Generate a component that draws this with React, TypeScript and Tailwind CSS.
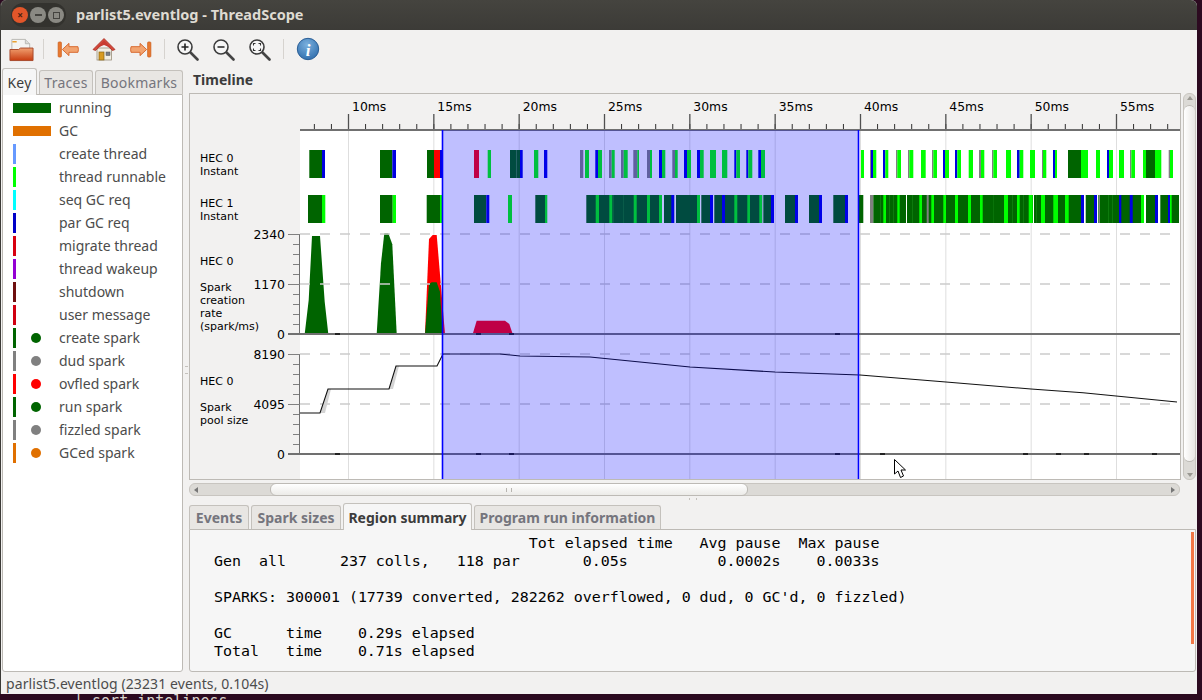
const UI = { fontFamily: '"Noto Sans", "Open Sans", sans-serif' };

// ── Key ───────────────────────────────────────────────────────────────────────

type KeyItem = { label: string; color: string; kind: 'box' | 'tick' | 'dot' };

const KEY_ITEMS: KeyItem[] = [
  { label: 'running', color: '#006400', kind: 'box' },
  { label: 'GC', color: '#e07000', kind: 'box' },
  { label: 'create thread', color: '#6699ff', kind: 'tick' },
  { label: 'thread runnable', color: '#00ff00', kind: 'tick' },
  { label: 'seq GC req', color: '#00ffff', kind: 'tick' },
  { label: 'par GC req', color: '#0000c8', kind: 'tick' },
  { label: 'migrate thread', color: '#d8000f', kind: 'tick' },
  { label: 'thread wakeup', color: '#9400d3', kind: 'tick' },
  { label: 'shutdown', color: '#6e0f0f', kind: 'tick' },
  { label: 'user message', color: '#d00010', kind: 'tick' },
  { label: 'create spark', color: '#006400', kind: 'dot' },
  { label: 'dud spark', color: '#808080', kind: 'dot' },
  { label: 'ovfled spark', color: '#ff0000', kind: 'dot' },
  { label: 'run spark', color: '#006400', kind: 'dot' },
  { label: 'fizzled spark', color: '#808080', kind: 'dot' },
  { label: 'GCed spark', color: '#e07000', kind: 'dot' },
];

function KeyRow({ item }: { item: KeyItem }) {
  return (
    <div className="flex h-[23px] items-center">
      {item.kind === 'box' ? (
        <div className="ml-[10px] h-[10px] w-[38px]" style={{ background: item.color }} />
      ) : (
        <div className="flex w-[48px] items-center">
          <div className="ml-[10px] h-[20px] w-[3px]" style={{ background: item.color }} />
          {item.kind === 'dot' && <div className="ml-[15px] h-[10px] w-[10px] rounded-full" style={{ background: item.color }} />}
        </div>
      )}
      <span className="ml-[8px] text-[14px] text-[#4c4c4c]">{item.label}</span>
    </div>
  );
}

// ── Datos del timeline ────────────────────────────────────────────────────────

const C: Record<string, string> = { g: '#006400', l: '#00ff00', b: '#0000e0', r: '#ff0000', c: '#ff0008', s: '#808080', w: '#ffffff', d: '#0d7a0d' };

type Bar = [number, number, string];

const HEC0: Bar[] = [
  [309.3, 322, 'g'], [322, 325, 'b'], [380, 392.3, 'g'], [392.3, 396, 'b'], [427, 434, 'g'], [434, 440, 'r'], [440, 442.5, 'b'],
  [474, 479, 'c'], [487.7, 491, 'l'], [510, 516.7, 'g'], [516.7, 520, 'g'], [520, 522.7, 'b'],
  [534, 538.3, 'l'], [544, 547.3, 'b'], [580, 583.3, 's'], [585, 589, 'l'], [595.3, 598, 'b'], [598, 602, 'l'],
  [609, 611.7, 's'], [611.7, 614.7, 'l'], [621, 623.7, 's'], [623.7, 627.7, 'l'], [633.3, 637.3, 's'], [637.3, 639, 'l'],
  [647, 650, 's'], [650, 652, 'l'], [659, 662, 'b'], [662, 665.3, 'l'], [672.3, 675, 's'], [675, 677.7, 'l'],
  [684, 687, 'b'], [687, 691, 'l'], [697, 700, 'b'], [700, 703.7, 'l'], [710, 716, 'l'], [722, 727.3, 'l'],
  [734.3, 736.3, 'b'], [736.3, 740, 'l'], [746.3, 748.3, 'b'], [748.3, 752.3, 'l'], [758.3, 761, 'b'], [761, 765, 'l'],
  [861, 864, 'l'], [870, 871, 's'], [871, 873, 'b'], [873, 876.3, 'l'], [883, 885.3, 'b'], [885.3, 888.3, 'l'],
  [896, 897.3, 's'], [897.3, 901, 'l'], [908, 909.3, 's'], [909.3, 913.3, 'l'], [921, 925.7, 'l'], [932, 933.3, 's'], [933.3, 937, 'l'],
  [943, 945, 'b'], [945, 949, 'l'], [955, 957.3, 'b'], [957.3, 961, 'l'], [968.7, 973, 'l'], [979, 981, 's'], [981, 984.3, 'l'],
  [992, 993.3, 's'], [993.3, 997, 'l'], [1006, 1011, 'l'], [1017, 1019.7, 'b'], [1019.7, 1023.3, 'l'], [1030, 1035, 'l'],
  [1042, 1043, 's'], [1043, 1046.3, 'l'], [1053, 1055, 'b'], [1055, 1057, 'l'], [1068, 1081, 'g'], [1081, 1085, 'l'], [1085, 1088, 'l'],
  [1096, 1100, 'l'], [1107, 1109, 'b'], [1109, 1113, 'l'], [1119, 1124, 'l'], [1130, 1131.3, 's'], [1131.3, 1135, 'l'],
  [1143, 1146, 'l'], [1146, 1155, 'g'], [1155, 1161.3, 'l'], [1168.7, 1170, 's'], [1170, 1173, 'l'],
];

const HEC1: Bar[] = [
  [308, 322, 'g'], [322, 325.3, 'l'], [380, 392.7, 'g'], [392.7, 396, 'l'], [426.7, 440, 'g'], [440, 442.5, 'l'],
  [474, 486.3, 'g'], [486.3, 489.3, 'b'], [508, 512, 'l'], [535.3, 545, 'g'], [545, 547.3, 'l'],
  [586.3, 771, 'g'], [595.7, 599, 'l'], [609.3, 612.3, 'l'], [613, 614, 'd'], [623, 624, 'd'], [633.7, 636.7, 'l'], [647, 650, 'l'],
  [659, 662, 'l'], [662, 664, 'w'], [671.3, 674.3, 'b'], [674.3, 676, 'w'], [697, 700, 'l'], [700, 701.3, 'w'], [710, 713, 'b'], [713, 714.3, 'w'],
  [722, 725, 'b'], [734.3, 737.3, 'l'], [747.3, 750, 'l'], [759.3, 762.3, 'l'], [762.3, 763.3, 'w'], [771, 774, 'b'],
  [785, 795, 'g'], [795, 798, 'b'], [809, 819, 'g'], [819, 822, 'b'], [833.3, 845, 'g'], [845, 848, 'b'],
  [859, 863.3, 'g'], [870, 873.3, 's'], [873.3, 1179, 'g'],
  [883.3, 886, 'l'], [897.3, 899.7, 'l'], [906, 907, 'w'], [919.3, 922, 'l'], [926.7, 928.7, 's'], [931.3, 934, 'l'], [943.3, 946, 'l'],
  [955, 958, 'l'], [968, 971, 'l'], [980, 982.7, 'l'], [993.3, 994, 'd'], [1004, 1008, 'l'], [1017, 1019.7, 'l'], [1028.7, 1032.7, 'l'],
  [1033, 1034, 'w'], [1041, 1045, 'l'], [1053.3, 1058, 'l'], [1065, 1068.7, 'l'], [1081, 1084, 'b'], [1084, 1085.7, 'w'], [1094, 1097, 'b'],
  [1097, 1098.3, 'w'], [1099, 1100, 's'], [1119, 1121.3, 'b'], [1129.7, 1132.7, 'b'], [1141, 1144, 'l'], [1144, 1146, 'w'],
  [1155, 1158, 'b'], [1158, 1160.3, 'w'], [1168, 1170, 'b'], [1170, 1171.7, 'l'],
  [880, 881, 'd'], [889, 890, 'd'], [893, 894, 'd'], [912, 913, 'd'], [1012, 1013, 'd'], [1023, 1024, 'd'], [1036, 1037, 'd'], [1108, 1109, 'd'], [1112, 1113, 'd'],
];

const TICK = 85.333;
const T0 = 348.5;
const MAJOR = Array.from({ length: 10 }, (_, i) => T0 + i * TICK);
const MINOR = Array.from({ length: 52 }, (_, i) => T0 - 3 * (TICK / 5) + i * (TICK / 5)).filter((x) => x > 300 && x < 1181);

const POOL = '300,413 320,413 328,389 389,389 396,366 437,366 443,354 500,354 520,356 590,357 690,367 775,372 860,375 946,382 1031,389 1083,392.7 1177,402';

function Bars({ data, y }: { data: Bar[]; y: number }) {
  return (
    <>
      {data.map(([a, b, c], i) => (
        <rect key={i} x={a} y={y} width={b - a} height={28} fill={C[c]} />
      ))}
    </>
  );
}

function YAxis({ top, labels }: { top: number; labels: string[] }) {
  const rows = Array.from({ length: 11 }, (_, i) => top + i * 10);
  return (
    <>
      {rows.map((y) => (
        <line key={y} x1={293} x2={300} y1={y + 0.5} y2={y + 0.5} stroke="#808080" />
      ))}
      <line x1={299.5} x2={299.5} y1={top} y2={top + 100} stroke="#707070" />
      {[0, 50].map((d) => (
        <g key={d}>
          <line x1={288} x2={300} y1={top + d + 0.5} y2={top + d + 0.5} stroke="#808080" />
          <line x1={300} x2={1181} y1={top + d} y2={top + d} stroke="#cccccc" strokeWidth={1.5} strokeDasharray="10 10" />
        </g>
      ))}
      <line x1={288} x2={1181} y1={top + 100} y2={top + 100} stroke="#707070" strokeWidth={2} />
      {labels.map((t, i) => (
        <text key={t} x={285} y={top + 4.5 + i * 50} textAnchor="end" fontSize={12.4} fill="#000000">{t}</text>
      ))}
    </>
  );
}

function Timeline() {
  return (
    <svg viewBox="190 94 990 385" className="h-[385px] w-[990px]" style={{ fontFamily: '"DejaVu Sans", sans-serif' }}>
      <rect x={300} y={130} width={881} height={349} fill="#ffffff" />
      {MAJOR.map((x) => (
        <line key={x} x1={x} x2={x} y1={130} y2={479} stroke="#dedede" />
      ))}

      {/* eje de tiempo */}
      {MINOR.map((x) => (
        <line key={x} x1={x} x2={x} y1={124} y2={130} stroke="#303030" />
      ))}
      {MAJOR.map((x, i) => (
        <g key={x}>
          <line x1={x} x2={x} y1={114} y2={130} stroke="#505050" strokeWidth={1.3} />
          <text x={x + 3.5} y={111} fontSize={12.4} fill="#000000">{`${10 + i * 5}ms`}</text>
        </g>
      ))}
      <line x1={300} x2={1181} y1={130} y2={130} stroke="#707070" strokeWidth={2} />

      <Bars data={HEC0} y={150} />
      <Bars data={HEC1} y={195} />

      <polygon points="425,334 429,239 432.7,235 436.7,235 445,334" fill="#ff0000" />
      <polygon points="425,334 429,284.3 431.7,282.3 436.7,282.3 440,291.7 442.7,334" fill="#006400" />
      <polygon points="304.7,334 308.7,300 312,236 320,236 324.7,301.7 328.3,334" fill="#006400" />
      <polygon points="376.7,334 381,263.3 384.3,233.3 388.3,233.3 392.3,244.3 396.7,334" fill="#006400" />
      <polygon points="472.7,334 476.7,320.7 505,320.7 509.3,324 512.7,334" fill="#ff0008" />

      <YAxis top={234} labels={['2340', '1170', '0']} />
      <YAxis top={354} labels={['8190', '4095', '0']} />

      <polygon points="320,413 325,413 331,389 328,389" fill="#d4d4d4" />
      <polygon points="389,389 393,389 399,366 396,366" fill="#d4d4d4" />
      <polyline points={POOL} fill="none" stroke="#111111" strokeWidth={1.1} />
      {[335, 476, 509, 835, 880, 1023, 1056, 1084, 1152].map((x) => (
        <rect key={x} x={x} y={453} width={5} height={2} fill="#222222" />
      ))}
      {[335, 476, 509, 835].map((x) => (
        <rect key={x} x={x} y={333} width={5} height={2} fill="#222222" />
      ))}

      {/* selección */}
      <rect x={442} y={130} width={417} height={349} fill="#0000ff" fillOpacity={0.25} />
      <line x1={442.5} x2={442.5} y1={130} y2={479} stroke="#0000ff" strokeWidth={1.6} />
      <line x1={858.5} x2={858.5} y1={130} y2={479} stroke="#0000ff" strokeWidth={1.6} />

      <g fontSize={11} fill="#000000">
        <text x={200} y={162}>HEC 0</text>
        <text x={200} y={175}>Instant</text>
        <text x={200} y={207}>HEC 1</text>
        <text x={200} y={220}>Instant</text>
        <text x={200} y={265}>HEC 0</text>
        <text x={200} y={291}>Spark</text>
        <text x={200} y={304}>creation</text>
        <text x={200} y={317}>rate</text>
        <text x={200} y={330}>(spark/ms)</text>
        <text x={200} y={385}>HEC 0</text>
        <text x={200} y={411}>Spark</text>
        <text x={200} y={424}>pool size</text>
      </g>

      {/* puntero */}
      <path d="M894.5 459.5 L894.5 474 L898 471 L900.5 477.5 L903.5 476 L901 470 L905.5 470 Z" fill="#ffffff" stroke="#000000" strokeWidth={1} />
    </svg>
  );
}

// ── Iconos de la barra ────────────────────────────────────────────────────────

function OpenIcon() {
  return (
    <svg width="25" height="25" viewBox="0 0 26 26">
      <path d="M3 2.5 H17 L21.5 7 V14 H3 Z" fill="#f4f4f2" stroke="#b8b8b4" />
      <path d="M17 2.5 V7 H21.5" fill="#dcdcd8" stroke="#b8b8b4" />
      <path d="M3.5 5 H8" stroke="#e8a030" strokeWidth="1.5" />
      <path d="M1 13 H10 L12 11.5 H25 V24.5 H1 Z" fill="url(#fold)" stroke="#a8482a" />
      <defs>
        <linearGradient id="fold" x1="0" x2="0" y1="0" y2="1">
          <stop offset="0" stopColor="#f0a070" />
          <stop offset="1" stopColor="#c83c10" />
        </linearGradient>
      </defs>
    </svg>
  );
}

function ArrowIcon({ flip }: { flip?: boolean }) {
  return (
    <svg width="23" height="17" viewBox="0 0 24 18" style={flip ? { transform: 'scaleX(-1)' } : undefined}>
      <rect x="1" y="1" width="3.5" height="16" rx="1" fill="#e8792f" stroke="#c85a1a" strokeWidth="0.7" />
      <path d="M5.5 9 L12.5 2.5 V6 H22 Q23 9 22 12 H12.5 V15.5 Z" fill="#f2a470" stroke="#d8662a" strokeWidth="1" strokeLinejoin="round" />
    </svg>
  );
}

function HomeIcon() {
  return (
    <svg width="24" height="24" viewBox="0 0 24 24">
      <rect x="5" y="11" width="14.5" height="12" fill="#f2eee4" stroke="#9a8f7c" strokeWidth="0.8" />
      <rect x="7" y="15" width="5" height="8" fill="#d89a20" stroke="#8a6414" strokeWidth="0.7" />
      <rect x="14" y="15" width="4" height="3.5" fill="#7a7f88" stroke="#555" strokeWidth="0.5" />
      <path d="M1 12.5 L12 1.5 L23 12.5 L20.5 13.5 L12 5.5 L3.5 13.5 Z" fill="#d44a3c" stroke="#a82c22" strokeWidth="0.8" strokeLinejoin="round" />
      <path d="M12 3.5 L19.5 11 L12 8 L4.5 11 Z" fill="#c83a30" />
    </svg>
  );
}

function ZoomIcon({ kind }: { kind: 'in' | 'out' | 'fit' }) {
  return (
    <svg width="23" height="23" viewBox="0 0 23 23">
      <path d="M14 14 L21.5 21.5" stroke="#444444" strokeWidth="2.6" strokeLinecap="round" />
      <circle cx="9" cy="9" r="7" fill="#f6f6f6" stroke="#3c3c3c" strokeWidth="1.6" />
      {kind !== 'fit' && <path d="M5.5 9 H12.5" stroke="#222" strokeWidth="1.6" />}
      {kind === 'in' && <path d="M9 5.5 V12.5" stroke="#222" strokeWidth="1.6" />}
      {kind === 'fit' && <path d="M5.5 7.5 V5.5 H7.5 M10.5 5.5 H12.5 V7.5 M12.5 10.5 V12.5 H10.5 M7.5 12.5 H5.5 V10.5" fill="none" stroke="#333" strokeWidth="1.1" />}
    </svg>
  );
}

function InfoIcon() {
  return (
    <svg width="24" height="24" viewBox="0 0 24 24">
      <defs>
        <radialGradient id="info" cx="0.45" cy="0.3" r="0.8">
          <stop offset="0" stopColor="#7ab0de" />
          <stop offset="1" stopColor="#2a68a8" />
        </radialGradient>
      </defs>
      <circle cx="12" cy="12" r="10.7" fill="url(#info)" stroke="#2a5e96" />
      <text x="12" y="18.5" textAnchor="middle" fontSize="17" fontWeight="700" fontStyle="italic" fill="#ffffff" style={{ fontFamily: '"Liberation Serif", serif' }}>i</text>
    </svg>
  );
}

function ToolButton({ children, className }: { children: React.ReactNode; className: string }) {
  return <div className={`flex h-[36px] items-center justify-center ${className}`}>{children}</div>;
}

function Sep({ className }: { className: string }) {
  return <div className={`h-[20px] w-px bg-[#d6d3cf] ${className}`} />;
}

// ── Piezas ────────────────────────────────────────────────────────────────────

function Tab({ label, active, bold, className }: { label: string; active?: boolean; bold?: boolean; className: string }) {
  return (
    <div
      className={`flex items-center justify-center rounded-t-[3px] border border-b-0 border-[#c4c1bc] text-[14px] ${bold ? 'font-bold' : 'tracking-[0.25px]'} ${
        active ? 'relative z-10 -mb-px h-[27px] self-end bg-[#f6f6f6] text-[#3c3c3c]' : 'h-[24px] self-end bg-[#e8e6e3] text-[#75757d]'
      } ${className}`}
    >
      {label}
    </div>
  );
}

const SUMMARY = `                                     Tot elapsed time   Avg pause  Max pause
  Gen  all      237 colls,   118 par       0.05s          0.0002s    0.0033s

  SPARKS: 300001 (17739 converted, 282262 overflowed, 0 dud, 0 GC'd, 0 fizzled)

  GC      time    0.29s elapsed
  Total   time    0.71s elapsed`;

export default function App() {
  return (
    <div className="flex h-[700px] w-[1202px] flex-col overflow-hidden bg-[#2c0a20]" style={UI}>
      <div className="flex h-[694px] w-[1197px] flex-col overflow-hidden rounded-t-[6px] border-l border-[#3c3b37] bg-[#f2f1f0]">
        {/* Título */}
        <div className="flex h-[30px] shrink-0 items-center bg-gradient-to-b from-[#45443f] to-[#3c3b37]">
          <div className="ml-[10px] flex h-[24px] w-[55px] items-center gap-[2px] rounded-full bg-[#33322e] pl-[1px]">
            <div className="flex h-[16px] w-[16px] items-center justify-center rounded-full bg-[#e2562a] text-[10px] leading-none font-bold text-[#4a2010]">×</div>
            <div className="flex h-[16px] w-[16px] items-center justify-center rounded-full bg-[#8a8983]"><div className="h-[2px] w-[7px] bg-[#44433f]" /></div>
            <div className="flex h-[16px] w-[16px] items-center justify-center rounded-full bg-[#8a8983]"><div className="h-[7px] w-[7px] border border-[#44433f]" /></div>
          </div>
          <span className="ml-[10px] text-[14.5px] font-bold text-[#dfdbd2]">parlist5.eventlog - ThreadScope</span>
        </div>

        {/* Barra de herramientas */}
        <div className="flex h-[38px] shrink-0 items-center">
          <ToolButton className="ml-[6px] w-[28px]"><OpenIcon /></ToolButton>
          <Sep className="ml-[8px]" />
          <ToolButton className="ml-[11px] w-[26px]"><ArrowIcon /></ToolButton>
          <ToolButton className="ml-[10px] w-[26px]"><HomeIcon /></ToolButton>
          <ToolButton className="ml-[10px] w-[26px]"><ArrowIcon flip /></ToolButton>
          <Sep className="ml-[11px]" />
          <ToolButton className="ml-[9px] w-[26px]"><ZoomIcon kind="in" /></ToolButton>
          <ToolButton className="ml-[10px] w-[26px]"><ZoomIcon kind="out" /></ToolButton>
          <ToolButton className="ml-[10px] w-[26px]"><ZoomIcon kind="fit" /></ToolButton>
          <Sep className="ml-[11px]" />
          <ToolButton className="ml-[11px] w-[26px]"><InfoIcon /></ToolButton>
        </div>

        <div className="flex min-h-0 flex-1">
          {/* Lateral */}
          <div className="ml-px flex w-[181px] shrink-0 flex-col">
            <div className="flex h-[26px] shrink-0 gap-[2px]">
              <Tab label="Key" active className="w-[35px]" />
              <Tab label="Traces" className="w-[54px]" />
              <Tab label="Bookmarks" className="w-[88px]" />
            </div>
            <div className="flex-1 rounded-b-[3px] border border-[#bdbab5] bg-white pt-px">
              {KEY_ITEMS.map((item) => (
                <KeyRow key={item.label} item={item} />
              ))}
            </div>
          </div>

          {/* Separador del panel */}
          <div className="flex w-[6px] shrink-0 items-center justify-center">
            <div className="h-[8px] w-[3px] border-y border-[#c4c1bc]" />
          </div>

          {/* Principal */}
          <div className="flex min-w-0 flex-1 flex-col">
            <div className="flex h-[25px] shrink-0 items-center pb-[2px] pl-[4px] text-[14px] font-bold text-[#3c3c3c]">Timeline</div>
            <div className="flex h-[387px] shrink-0">
              <div className="h-[387px] w-[992px] border border-[#bdbab5]">
                <Timeline />
              </div>
              <div className="ml-[2px] flex h-[387px] w-[13px] flex-col items-center rounded-[6px] border border-[#c8c5c0] bg-[#dcdad6]">
                <div className="mt-[2px] h-0 w-0 border-x-[3px] border-b-[4px] border-x-transparent border-b-[#9a9892]" />
                <div className="mt-[5px] mb-[11px] w-full flex-1 rounded-[6px] border-y border-[#bdbab5] bg-gradient-to-r from-[#ffffff] to-[#e8e6e3]" />
                <div className="mb-[2px] h-0 w-0 border-x-[3px] border-t-[4px] border-x-transparent border-t-[#9a9892]" />
              </div>
            </div>

            {/* Barra horizontal */}
            <div className="mt-[3px] flex h-[13px] w-[991px] shrink-0 items-center rounded-[6px] border border-[#c8c5c0] bg-[#dcdad6]">
              <div className="ml-[4px] h-0 w-0 border-y-[3px] border-r-[4px] border-y-transparent border-r-[#777]" />
              <div className="ml-[72px] flex h-[13px] w-[478px] items-center justify-center rounded-[6px] border border-[#bdbab5] bg-gradient-to-b from-[#ffffff] to-[#ecebe8]">
                <div className="h-[4px] w-[6px] border-x border-[#b8b5b0]" />
              </div>
              <div className="mr-[4px] ml-auto h-0 w-0 border-y-[3px] border-l-[4px] border-y-transparent border-l-[#777]" />
            </div>
            <div className="flex h-[6px] shrink-0 items-center justify-center">
              <div className="h-[2px] w-[8px] border-x border-[#c4c1bc]" />
            </div>

            {/* Pestañas inferiores */}
            <div className="flex h-[27px] shrink-0 gap-[2px]">
              <Tab label="Events" bold className="w-[60px]" />
              <Tab label="Spark sizes" bold className="w-[90px]" />
              <Tab label="Region summary" active bold className="w-[129px]" />
              <Tab label="Program run information" bold className="w-[187px]" />
            </div>
            <div className="relative mr-[1px] flex-1 rounded-b-[3px] border border-[#bdbab5] bg-[#f6f6f6] pt-[4px] pl-[6px]">
              <pre className="text-[14.95px] leading-[18px] text-[#000000]" style={{ fontFamily: '"DejaVu Sans Mono", monospace' }}>{SUMMARY}</pre>
              <div className="absolute top-[2px] right-[1px] h-[112px] w-[3px] bg-[#f07746]" />
            </div>
          </div>
        </div>

        {/* Estado */}
        <div className="flex h-[22px] shrink-0 items-center pl-[5px] text-[14px] tracking-[0.1px] text-[#4c4c4c]">
          parlist5.eventlog (23231 events, 0.104s)
        </div>
      </div>

      {/* Terminal detrás */}
      <div className="h-[6px] overflow-hidden pl-[74px] text-[15px] leading-[14px] whitespace-pre text-[#d8d4cc]" style={{ fontFamily: '"DejaVu Sans Mono", monospace' }}>
        | sort inteliness
      </div>
    </div>
  );
}
